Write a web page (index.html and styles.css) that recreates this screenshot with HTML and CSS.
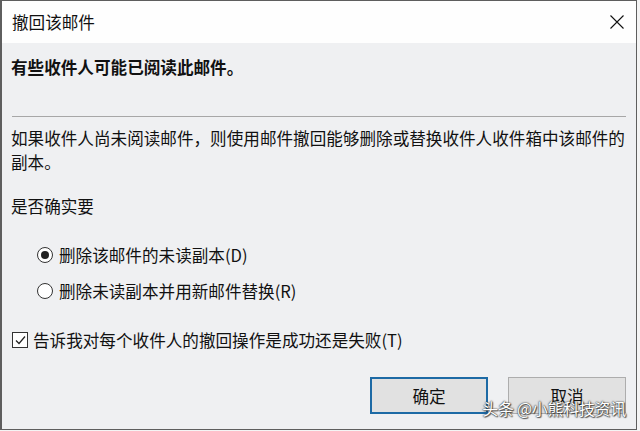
FILE: index.html
```html
<!DOCTYPE html>
<html lang="zh-CN">
<head>
<meta charset="utf-8">
<title>撤回该邮件</title>
<link rel="stylesheet" href="styles.css">
</head>
<body>
<div class="window">
  <div class="titlebar">
    <span class="title">撤回该邮件</span>
    <svg class="close" width="14" height="14" viewBox="0 0 14 14"><path d="M0.5 0.5 L13.5 13.5 M13.5 0.5 L0.5 13.5" stroke="#111" stroke-width="1.1" fill="none"/></svg>
  </div>
  <div class="body">
    <div class="headline">有些收件人可能已阅读此邮件。</div>
    <div class="sep"></div>
    <p class="para">如果收件人尚未阅读邮件，则使用邮件撤回能够删除或替换收件人收件箱中该邮件的副本。</p>
    <div class="ask">是否确实要</div>
    <div class="options">
      <div class="opt"><span class="radio checked"></span><span>删除该邮件的未读副本(D)</span></div>
      <div class="opt"><span class="radio"></span><span>删除未读副本并用新邮件替换(R)</span></div>
    </div>
    <div class="check-row">
      <span class="checkbox"><svg width="13" height="13" viewBox="0 0 13 13"><path d="M2 6.5 L5 9.5 L11 2.5" stroke="#222" stroke-width="1.2" fill="none"/></svg></span>
      <span>告诉我对每个收件人的撤回操作是成功还是失败(T)</span>
    </div>
    <div class="buttons">
      <button class="btn primary">确定</button>
      <button class="btn">取消</button>
    </div>
  </div>
  <div class="watermark">头条 @小熊科技资讯</div>
</div>
</body>
</html>
```
FILE: styles.css
```css
html, body {
  margin: 0;
  padding: 0;
  background: #f4f4f4;
}
body {
  width: 640px;
  height: 431px;
  overflow: hidden;
  font-family: "Noto Sans CJK SC", "Noto Sans", sans-serif;
  font-size: 16.6px;
  color: #111;
}
.window {
  position: relative;
  box-sizing: border-box;
  width: 637px;
  height: 430px;
  border: 1px solid #5e5e5e;
  border-left-width: 2px;
  background: #eff0f2;
  display: flex;
  flex-direction: column;
}
.titlebar {
  height: 42px;
  flex: none;
  background: #fefefe;
  display: flex;
  align-items: center;
  justify-content: space-between;
  padding: 0 11px 0 10px;
}
.title {
  line-height: 24px;
  margin-top: 0;
}
.close {
  display: block;
  margin-right: 1px;
  margin-top: -1px;
}
.body {
  padding: 12px 10px 0 9px;
}
.headline {
  font-weight: bold;
  line-height: 24px;
}
.sep {
  height: 1px;
  background: #a7a7a7;
  margin: 37px 0 0 1px;
  width: 614px;
}
.para {
  margin: 9px 0 0 0;
  line-height: 24px;
}
.ask {
  margin-top: 20px;
  line-height: 24px;
}
.options {
  margin-top: 25px;
  padding-left: 26px;
  display: flex;
  flex-direction: column;
  gap: 12px;
}
.opt {
  display: flex;
  align-items: center;
  line-height: 24px;
  gap: 6px;
}
.radio {
  box-sizing: border-box;
  width: 16px;
  height: 16px;
  border: 1px solid #333;
  border-radius: 50%;
  background: #fff;
  display: flex;
  align-items: center;
  justify-content: center;
  flex: none;
}
.radio.checked::after {
  content: "";
  width: 8px;
  height: 8px;
  border-radius: 50%;
  background: #222;
}
.check-row {
  margin-top: 25px;
  display: flex;
  align-items: center;
  gap: 5px;
  line-height: 24px;
  padding-left: 1px;
}
.checkbox {
  box-sizing: border-box;
  width: 16px;
  height: 16px;
  border: 1px solid #333;
  background: #fff;
  display: flex;
  align-items: center;
  justify-content: center;
  flex: none;
}
.checkbox svg { display: block; }
.buttons {
  margin-top: 25px;
  display: flex;
  justify-content: flex-end;
  gap: 20px;
  padding-right: 0;
}
.btn {
  box-sizing: border-box;
  width: 118px;
  height: 37px;
  font-family: inherit;
  font-size: 16.6px;
  color: #111;
  background: #e1e1e1;
  border: 1px solid #adadad;
  padding: 0;
  margin: 0;
}
.btn.primary {
  border: 2px solid #1d6aa5;
}
.watermark {
  position: absolute;
  right: 10px;
  top: 396px;
  font-size: 16px;
  line-height: 22px;
  color: #fff;
  text-shadow: 0 0 2px #333, 0 0 1px #333, 1px 1px 1px rgba(0,0,0,0.6);
  letter-spacing: -0.3px;
}
```
